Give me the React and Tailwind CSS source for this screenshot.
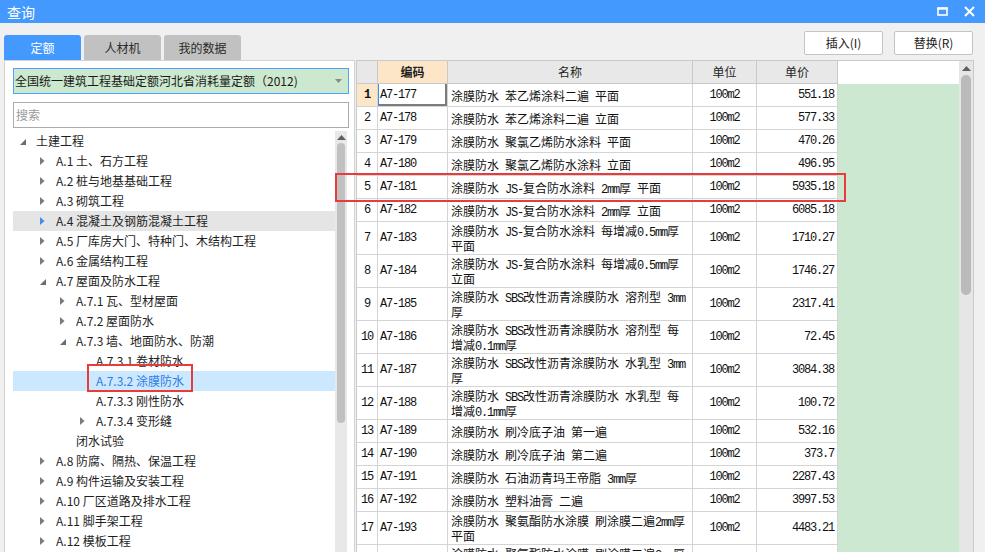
import React from "react";

const rows = [
  { n: 1, code: "A7-177", name: ["涂膜防水 苯乙烯涂料二遍 平面"], price: "551.18" },
  { n: 2, code: "A7-178", name: ["涂膜防水 苯乙烯涂料二遍 立面"], price: "577.33" },
  { n: 3, code: "A7-179", name: ["涂膜防水 聚氯乙烯防水涂料 平面"], price: "470.26" },
  { n: 4, code: "A7-180", name: ["涂膜防水 聚氯乙烯防水涂料 立面"], price: "496.95" },
  { n: 5, code: "A7-181", name: ["涂膜防水 JS-复合防水涂料 2mm厚 平面"], price: "5935.18" },
  { n: 6, code: "A7-182", name: ["涂膜防水 JS-复合防水涂料 2mm厚 立面"], price: "6085.18" },
  { n: 7, code: "A7-183", name: ["涂膜防水 JS-复合防水涂料 每增减0.5mm厚", "平面"], price: "1710.27" },
  { n: 8, code: "A7-184", name: ["涂膜防水 JS-复合防水涂料 每增减0.5mm厚", "立面"], price: "1746.27" },
  { n: 9, code: "A7-185", name: ["涂膜防水 SBS改性沥青涂膜防水 溶剂型 3mm", "厚"], price: "2317.41" },
  { n: 10, code: "A7-186", name: ["涂膜防水 SBS改性沥青涂膜防水 溶剂型 每", "增减0.1mm厚"], price: "72.45" },
  { n: 11, code: "A7-187", name: ["涂膜防水 SBS改性沥青涂膜防水 水乳型 3mm", "厚"], price: "3084.38" },
  { n: 12, code: "A7-188", name: ["涂膜防水 SBS改性沥青涂膜防水 水乳型 每", "增减0.1mm厚"], price: "100.72" },
  { n: 13, code: "A7-189", name: ["涂膜防水 刷冷底子油 第一遍"], price: "532.16" },
  { n: 14, code: "A7-190", name: ["涂膜防水 刷冷底子油 第二遍"], price: "373.7" },
  { n: 15, code: "A7-191", name: ["涂膜防水 石油沥青玛王帝脂 3mm厚"], price: "2287.43" },
  { n: 16, code: "A7-192", name: ["涂膜防水 塑料油膏 二遍"], price: "3997.53" },
  { n: 17, code: "A7-193", name: ["涂膜防水 聚氨酯防水涂膜 刷涂膜二遍2mm厚", "平面"], price: "4483.21" },
  { n: 18, code: "A7-194", name: ["涂膜防水 聚氨酯防水涂膜 刷涂膜二遍2mm厚", "立面"], price: "4592.38" },
];

const tree = [
  { lv: 0, label: "土建工程", icon: "open" },
  { lv: 1, label: "A.1 土、石方工程", icon: "closed" },
  { lv: 1, label: "A.2 桩与地基基础工程", icon: "closed" },
  { lv: 1, label: "A.3 砌筑工程", icon: "closed" },
  { lv: 1, label: "A.4 混凝土及钢筋混凝土工程", icon: "closed", hover: true },
  { lv: 1, label: "A.5 厂库房大门、特种门、木结构工程", icon: "closed" },
  { lv: 1, label: "A.6 金属结构工程", icon: "closed" },
  { lv: 1, label: "A.7 屋面及防水工程", icon: "open" },
  { lv: 2, label: "A.7.1 瓦、型材屋面", icon: "closed" },
  { lv: 2, label: "A.7.2 屋面防水", icon: "closed" },
  { lv: 2, label: "A.7.3 墙、地面防水、防潮", icon: "open" },
  { lv: 3, label: "A.7.3.1 卷材防水" },
  { lv: 3, label: "A.7.3.2 涂膜防水", selected: true },
  { lv: 3, label: "A.7.3.3 刚性防水" },
  { lv: 3, label: "A.7.3.4 变形缝", icon: "closed" },
  { lv: 2, label: "闭水试验" },
  { lv: 1, label: "A.8 防腐、隔热、保温工程", icon: "closed" },
  { lv: 1, label: "A.9 构件运输及安装工程", icon: "closed" },
  { lv: 1, label: "A.10 厂区道路及排水工程", icon: "closed" },
  { lv: 1, label: "A.11 脚手架工程", icon: "closed" },
  { lv: 1, label: "A.12 模板工程", icon: "closed" },
];

const indent = ["pl-[4px]", "pl-[24px]", "pl-[44px]", "pl-[64px]"];

// latin runs get the narrow mono face, like the SimSun half-width glyphs
function Mixed({ text }) {
  const parts = text.split(/([\x20-\x7e]+)/).filter((p) => p !== "");
  return parts.map((p, i) =>
    /^[\x20-\x7e]+$/.test(p) ? (
      <span key={i} className="font-['Liberation_Mono',monospace] tracking-[-1.2px]">
        {p}
      </span>
    ) : (
      <span key={i}>{p}</span>
    )
  );
}

function TreeIcon({ type, hover }) {
  if (type === "open")
    return (
      <svg width="7" height="7" viewBox="0 0 7 7" className="mt-[2px]">
        <path d="M6 0 L6 6 L0 6 Z" fill="#6b6b6b" />
      </svg>
    );
  if (type === "closed")
    return (
      <svg width="5" height="8" viewBox="0 0 5 8">
        <path d="M0 0 L4.5 4 L0 8 Z" fill={hover ? "#3b8ff0" : "#7a7a7a"} />
      </svg>
    );
  return null;
}

function UpArrow() {
  return (
    <svg width="9" height="5" viewBox="0 0 9 5">
      <path d="M0 5 L4.5 0 L9 5 Z" fill="#5f5f5f" />
    </svg>
  );
}

export default function App() {
  return (
    <div className="relative w-[985px] h-[552px] overflow-hidden bg-[#f0f0f0] font-['Noto_Sans_CJK_SC',sans-serif] text-[#1e1e1e]">
      {/* title bar */}
      <div className="h-[23px] bg-[#4499ff] flex items-center pl-[7px] pr-[10px]">
        <span className="text-white text-[14px] leading-none">查询</span>
        <div className="ml-auto flex items-center gap-[16px]">
          <svg width="11" height="9" viewBox="0 0 11 9">
            <rect x="1" y="1.5" width="9" height="6.5" fill="none" stroke="#fff" strokeWidth="1.6" />
            <rect x="0.2" y="0.2" width="10.6" height="2.4" fill="#fff" />
          </svg>
          <svg width="11" height="11" viewBox="0 0 11 11">
            <path d="M1 1 L10 10 M10 1 L1 10" stroke="#fff" strokeWidth="2" />
          </svg>
        </div>
      </div>

      {/* tabs + buttons */}
      <div className="h-[37px] flex">
        <div className="flex items-end gap-[3px] pl-[4px]">
          <div className="w-[77px] h-[25px] rounded-t-[3px] bg-[#4499ff] text-white text-[12px] flex items-center justify-center">
            定额
          </div>
          <div className="w-[77px] h-[25px] rounded-t-[3px] bg-[#c1c1c1] text-[#2a2a2a] text-[12px] flex items-center justify-center">
            人材机
          </div>
          <div className="w-[77px] h-[25px] rounded-t-[3px] bg-[#c1c1c1] text-[#2a2a2a] text-[12px] flex items-center justify-center">
            我的数据
          </div>
        </div>
        <div className="ml-auto flex items-start gap-[11px] pt-[8px] pr-[12px]">
          <button className="w-[79px] h-[24px] bg-white border border-[#c4c4c4] rounded-[2px] text-[12px] text-[#222] flex items-center justify-center">
            插入(I)
          </button>
          <button className="w-[79px] h-[24px] bg-white border border-[#c4c4c4] rounded-[2px] text-[12px] text-[#222] flex items-center justify-center">
            替换(R)
          </button>
        </div>
      </div>

      {/* main */}
      <div className="flex h-[492px] pl-[4px]">
        {/* left panel */}
        <div className="w-[351px] h-[500px] bg-white border border-[#d2d2d2] flex flex-col pl-[8px]">
          <div className="mt-[7px] w-[336px] h-[26px] bg-[#cce8cf] border border-[#4ea3ff] flex items-center pl-[1px] pr-[6px]">
            <span className="text-[12px] text-[#1a1a1a] whitespace-nowrap">全国统一建筑工程基础定额河北省消耗量定额（2012)</span>
            <svg width="7" height="4" viewBox="0 0 7 4" className="ml-auto">
              <path d="M0 0 L7 0 L3.5 4 Z" fill="#8a8a8a" />
            </svg>
          </div>
          <div className="mt-[8px] w-[336px] h-[26px] bg-white border border-[#ababab] flex items-center pl-[2px]">
            <span className="text-[12px] text-[#9a9a9a]">搜索</span>
          </div>
          <div className="mt-[3px] flex flex-1">
            <div className="w-[322px] flex flex-col">
              {tree.map((t, i) => (
                <div
                  key={i}
                  className={`h-[20px] shrink-0 flex items-center ${indent[t.lv]} ${
                    t.selected ? "bg-[#cce8ff]" : t.hover ? "bg-[#e5e5e5]" : ""
                  }`}
                >
                  <div className="w-[19px] pl-[3px] flex items-center">
                    <TreeIcon type={t.icon} hover={t.hover} />
                  </div>
                  <span
                    className={`text-[12px] leading-[20px] whitespace-nowrap ${
                      t.selected ? "text-[#2d7de6]" : "text-[#1e1e1e]"
                    }`}
                  >
                    {t.label}
                  </span>
                </div>
              ))}
            </div>
            <div className="w-[12px] bg-[#e8e8e8] flex flex-col items-center">
              <div className="h-[10px] flex items-center pt-[2px]">
                <UpArrow />
              </div>
              <div className="mt-[2px] w-[8px] h-[280px] rounded-full bg-[#c0c0c0]" />
            </div>
          </div>
        </div>

        {/* right panel */}
        <div className="ml-[1px] w-[618px] h-[500px] border-l border-r border-t border-[#cacaca] flex bg-white">
          <div className="w-[481px] flex flex-col">
            {/* header */}
            <div className="flex h-[23px] shrink-0 border-b border-[#c9c9c9] bg-[#e8e8e8] text-[12px]">
              <div className="w-[21px] border-r border-[#c9c9c9]" />
              <div className="w-[70px] border-r border-[#c9c9c9] bg-[#fde5c8] font-bold flex items-center justify-center">
                编码
              </div>
              <div className="w-[245px] border-r border-[#c9c9c9] flex items-center justify-center">名称</div>
              <div className="w-[64px] border-r border-[#c9c9c9] flex items-center justify-center">单位</div>
              <div className="w-[81px] border-r border-[#c9c9c9] flex items-center justify-center">单价</div>
            </div>
            {rows.map((r) => (
              <div
                key={r.n}
                className={`flex shrink-0 border-b border-[#d4d4d4] text-[12px] text-[#111] ${
                  r.name.length > 1 ? "h-[33px]" : "h-[23px]"
                }`}
              >
                <div
                  className={`w-[21px] border-r border-[#d4d4d4] flex items-center justify-center font-['Liberation_Mono',monospace] tracking-[-1.2px] ${
                    r.n === 1 ? "bg-[#fde5c8] font-bold" : ""
                  }`}
                >
                  {r.n}
                </div>
                <div
                  className={`w-[70px] border-r border-[#d4d4d4] flex items-center pl-[2px] font-['Liberation_Mono',monospace] tracking-[-1.2px] ${
                    r.n === 1 ? "shadow-[inset_1px_0_0_#3d8fe9,inset_-2px_-2px_0_#7c7c7c]" : ""
                  }`}
                >
                  {r.code}
                </div>
                <div className="w-[245px] border-r border-[#d4d4d4] flex flex-col justify-center pl-[3px]">
                  {r.name.map((line, j) => (
                    <div key={j} className="h-[15px] leading-[15px] whitespace-pre">
                      <Mixed text={line} />
                    </div>
                  ))}
                </div>
                <div className="w-[64px] border-r border-[#d4d4d4] flex items-center justify-center font-['Liberation_Mono',monospace] tracking-[-1.2px]">
                  100m2
                </div>
                <div className="w-[81px] border-r border-[#d4d4d4] flex items-center justify-end pr-[3px] font-['Liberation_Mono',monospace] tracking-[-1.2px]">
                  {r.price}
                </div>
              </div>
            ))}
          </div>
          <div className="w-[121px] flex flex-col">
            <div className="h-[23px] shrink-0 bg-white" />
            <div className="flex-1 bg-[#cde8d0]" />
          </div>
          <div className="w-[14px] bg-[#e6e6e6] flex flex-col items-center">
            <div className="h-[12px] flex items-center pt-[2px]">
              <UpArrow />
            </div>
            <div className="mt-[2px] w-[10px] h-[220px] rounded-full bg-[#bababa]" />
          </div>
        </div>
      </div>

      {/* red highlight marks */}
      <div className="absolute left-[335px] top-[173px] w-[511px] h-[29px] border-2 border-[#e63c3c]" />
      <div className="absolute left-[87px] top-[364px] w-[106px] h-[28px] border-2 border-[#e63c3c]" />
    </div>
  );
}
